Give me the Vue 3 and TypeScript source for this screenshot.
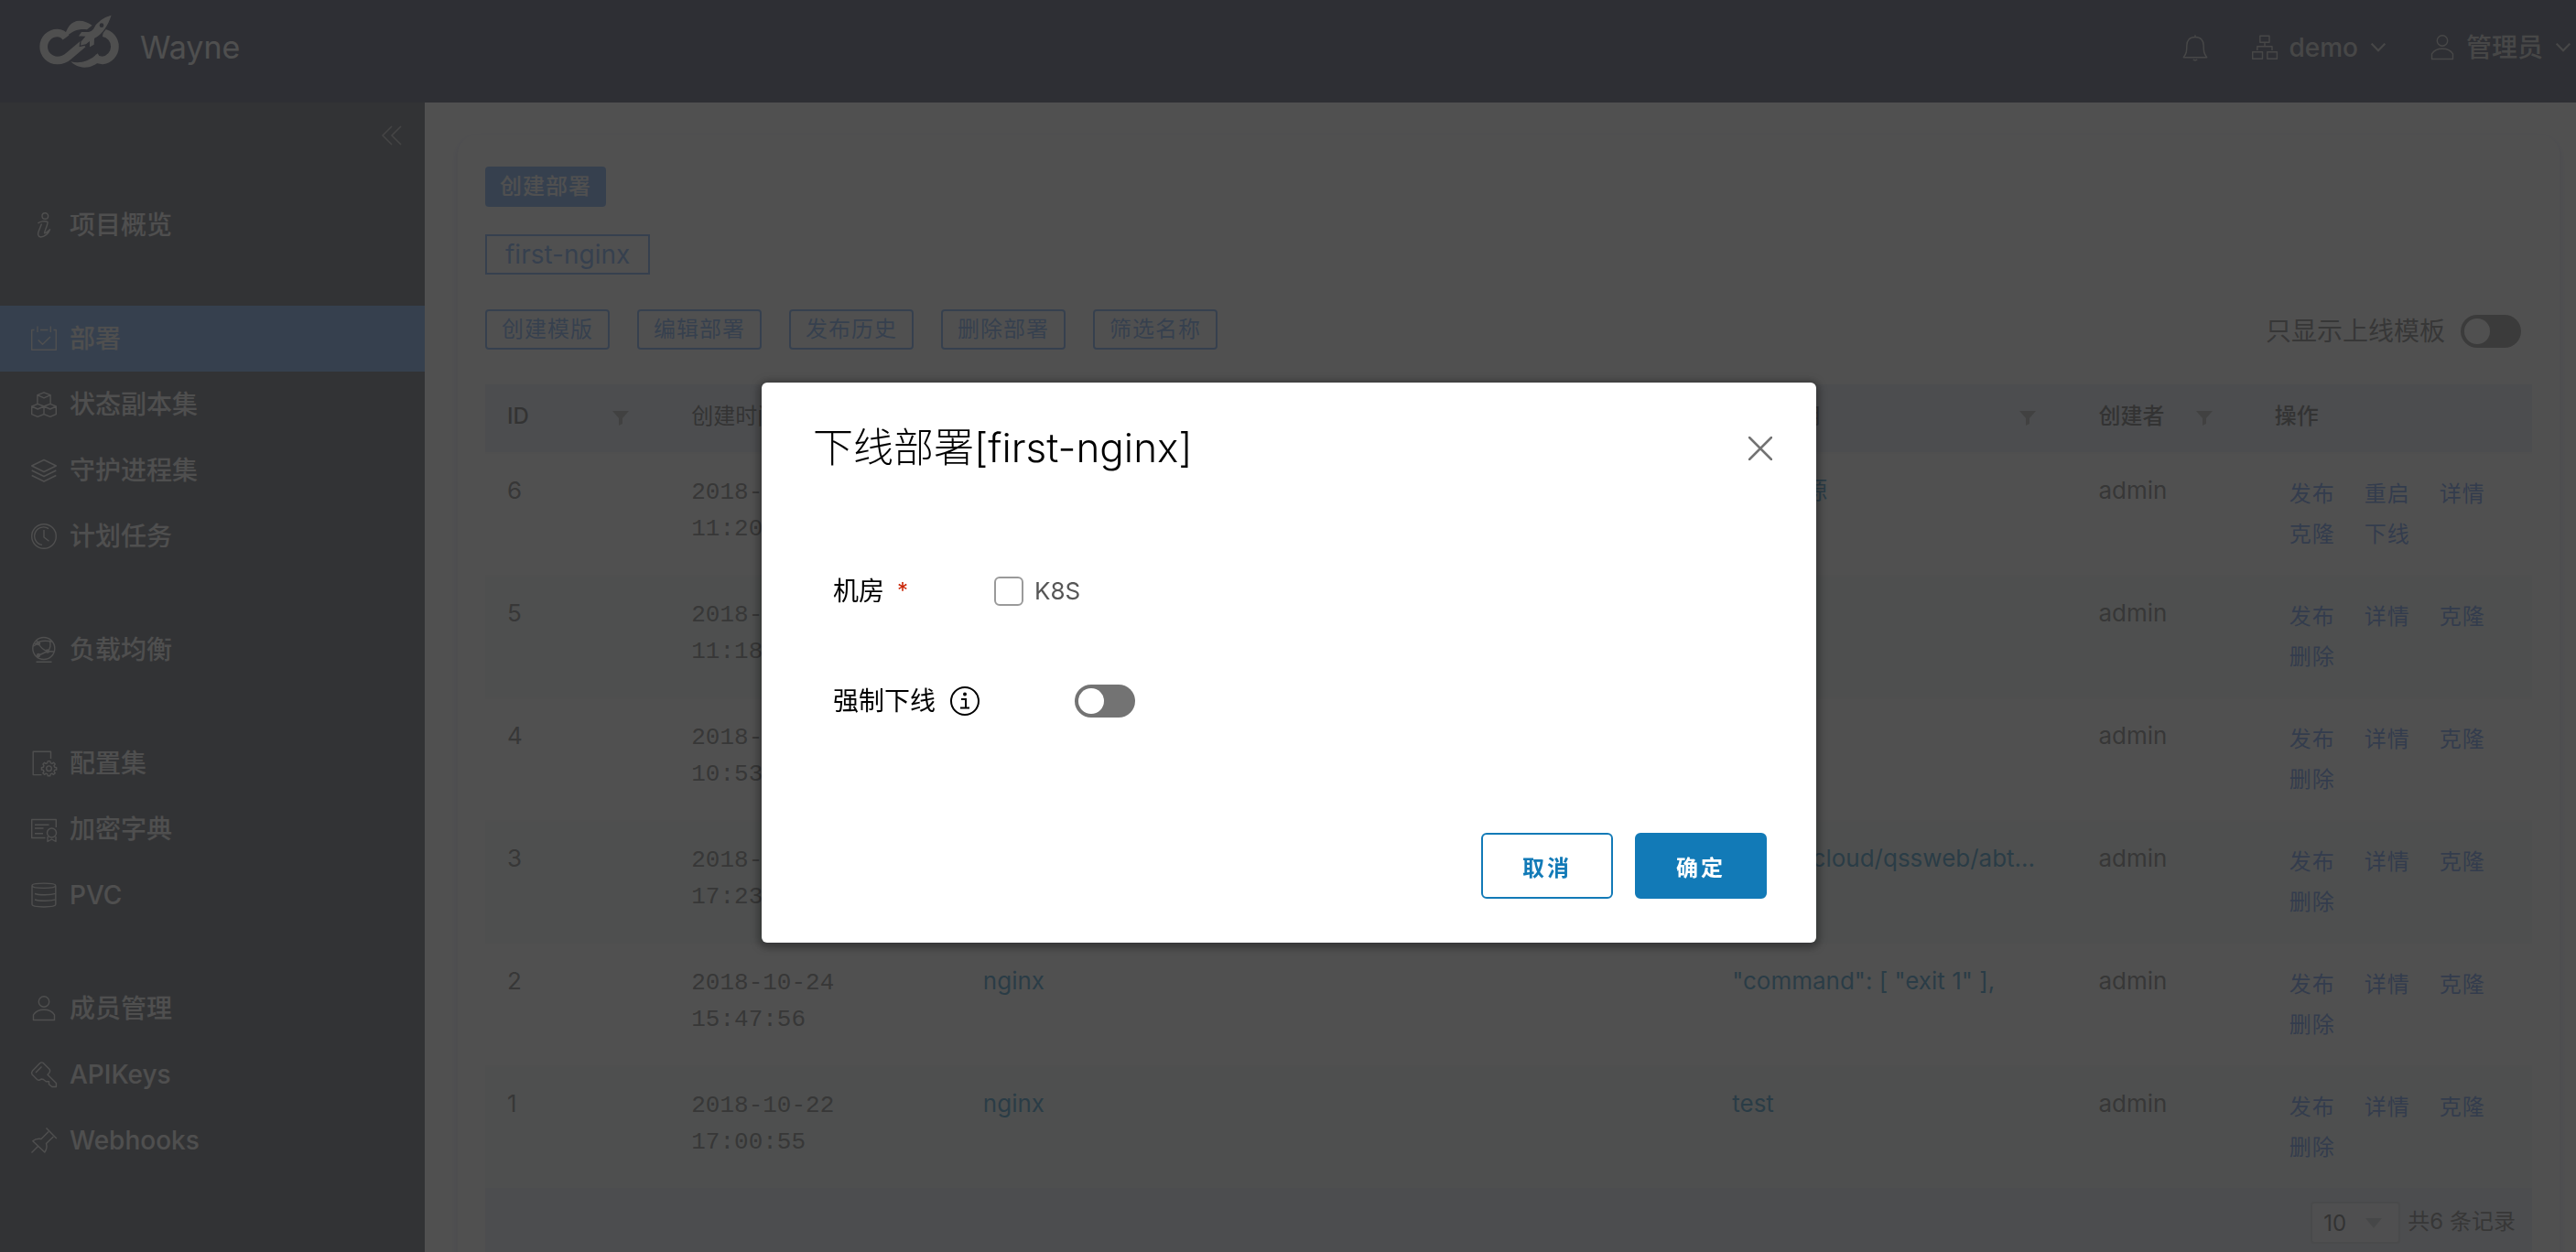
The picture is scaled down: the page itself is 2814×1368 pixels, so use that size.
<script setup lang="ts">
import { ref } from 'vue'

interface NavItem {
  label: string
  icon: string
  active?: boolean
}

interface Row {
  id: number
  date: string
  time: string
  name: string
  note: string
  user: string
  actions: string[]
}

const navGroups: NavItem[][] = [
  [{ label: '项目概览', icon: 'info' }],
  [
    { label: '部署', icon: 'deploy', active: true },
    { label: '状态副本集', icon: 'blocks' },
    { label: '守护进程集', icon: 'layers' },
    { label: '计划任务', icon: 'clock' },
  ],
  [{ label: '负载均衡', icon: 'network' }],
  [
    { label: '配置集', icon: 'config' },
    { label: '加密字典', icon: 'certificate' },
    { label: 'PVC', icon: 'storage' },
  ],
  [
    { label: '成员管理', icon: 'user' },
    { label: 'APIKeys', icon: 'key' },
    { label: 'Webhooks', icon: 'pin' },
  ],
]

const iconPaths: Record<string, string> = {
  info: 'M12 4a3.3 3.3 0 1 0 6.600 0a3.3 3.300 0 1 0-6.600 0M7.500 12C9 9.800 16 9 18 10.500C18.600 13 14.500 20.500 14.600 22.600C16 23.500 18.500 20.500 20.500 18.800C19 23.500 14 27 10.500 27C7 26.600 7.300 23 8.300 20.500L11.500 12.500',
  deploy: 'M3.500 4.500H.7V26.300H27.300V4.500H24.500M10 4.500H18.500M7 .5V7M21.300 .5V7M7.800 15.500L12.500 20.300L21 12',
  blocks: 'M6.900 13V3.600L14 .8L21.100 3.600V13M6.900 3.600L14 6.800L21.100 3.600M.7 16L7.200 13.300L14 16V24.600L7.200 27.400L.7 24.600ZM.7 16L7.200 19L14 16M14 16L20.800 13.300L27.300 16V24.600L20.800 27.400L14 24.600M14 16L20.800 19L27.300 16',
  layers: 'M14 2.500L27.300 9L14 15.500L.7 9ZM.7 14L14 20.500L27.300 14M.7 19.500L14 26L27.300 19.500',
  clock: 'M.7 14a13.300 13.300 0 1 0 26.600 0a13.300 13.300 0 1 0-26.600 0M19 5.600A9.800 9.800 0 1 0 12 23.400M14 7V15L19.500 19.300',
  network: 'M1.800 12.500a12 12 0 1 0 24 0a12 12 0 1 0-24 0M5.500 27.300H22.500M4 8C8 4 17 4 23 5M8 7C10 11 14 14.500 18 15.500C21 13 22 8 20 4M2.500 10L8 7L6 4M18 15.500L8.500 20L6 20.500M18 15.500L25 16M6.500 7a1.500 1.500 0 1 0 3 0a1.500 1.500 0 1 0-3 0M16.500 15.500a1.500 1.500 0 1 0 3 0a1.500 1.500 0 1 0-3 0M6.500 20a1.500 1.500 0 1 0 3 0a1.500 1.500 0 1 0-3 0',
  config: 'M21.500 9V1.200H2.200V26.600H11.500M16.700 19.700a2.800 2.800 0 1 0 5.600 0a2.800 2.800 0 1 0-5.600 0M18.300 11.600H20.700L21.200 13.700L22.900 14.400L24.700 13.200L26.300 14.900L25 16.700L25.700 18.300L27.700 18.700V21L25.700 21.400L25 23L26.200 24.700L24.500 26.300L22.800 25.200L21.200 25.900L20.700 27.800H18.300L17.800 25.900L16.200 25.200L14.500 26.300L12.900 24.700L14 23L13.300 21.400L11.400 21V18.700L13.400 18.200L14 16.600L12.900 14.900L14.500 13.300L16.200 14.400L17.800 13.700Z',
  certificate: 'M27.300 12V3.500H.7V23.500H15.500M4 9.200H19.500M4 13H13.500M4 18.800H13M17.500 18a5 5 0 1 0 10 0a5 5 0 1 0-10 0M18 22V27.500L22.500 25L27 27.500V22',
  storage: 'M1 3.700C1 .2 26.800 .2 26.800 3.700S1 7.200 1 3.700V24.300C1 27.800 26.800 27.800 26.800 24.300V3.700M4 12.500C9 14.300 21 14 26.800 12.300M4 19C9 20.800 21 20.500 26.800 18.800',
  user: 'M8.300 6.500a5.700 5.700 0 1 0 11.400 0a5.700 5.700 0 1 0-11.400 0M2.500 26.500V20.800C5 17 9 15.300 14 15.300S23 17 25.500 20.800V26.500Z',
  key: 'M13 1.300L20 8.300C21.300 10 20.500 12 18 14.200L27.400 23.500V27.500H22.800L19.500 24.800V21.800H16.300L13.500 19.500L11 19C9 21 8 20.800 6.500 19.500L1 14C.3 12.500 .5 11.300 1.500 10L9.500 1.800C10.800 .7 12 .6 13 1.300ZM5 12L11.500 5.500',
  pin: 'M16.500 .5L27.800 12M19 4.500L11 12.500C7.500 11.800 4.500 12.500 1.800 14.800L14.800 27C17 24 17.500 20.500 16.500 17.500L24.300 10M8 20L.5 27.500',
  bell: 'M14 2.500V.3M14 2.500C8 2.500 4.800 6 4.800 12C4.800 18 4.500 20.500 1.300 24.700H26.700C23.500 20.500 23.200 18 23.200 12C23.200 6 20 2.500 14 2.500M11.800 27C13 28 15 28 16.200 27',
  tree: 'M8.800 1.300H19V8.300H8.800ZM14 8.300V12.800M5.800 17V12.800H22V17M.7 18.800H11.500V26.300H.7ZM16.800 18.800H27.400V26.300H16.800Z',
}

const rows: Row[] = [
  { id: 6, date: '2018-10-29', time: '11:20:36', name: 'nginx', note: '更新资源', user: 'admin', actions: ['发布', '重启', '详情', '克隆', '下线'] },
  { id: 5, date: '2018-10-29', time: '11:18:09', name: 'nginx', note: 'test', user: 'admin', actions: ['发布', '详情', '克隆', '删除'] },
  { id: 4, date: '2018-10-29', time: '10:53:41', name: 'nginx', note: 'test', user: 'admin', actions: ['发布', '详情', '克隆', '删除'] },
  { id: 3, date: '2018-10-24', time: '17:23:12', name: 'nginx', note: 'harbor.cloud/qssweb/abt...', user: 'admin', actions: ['发布', '详情', '克隆', '删除'] },
  { id: 2, date: '2018-10-24', time: '15:47:56', name: 'nginx', note: '"command": [ "exit 1" ],', user: 'admin', actions: ['发布', '详情', '克隆', '删除'] },
  { id: 1, date: '2018-10-22', time: '17:00:55', name: 'nginx', note: 'test', user: 'admin', actions: ['发布', '详情', '克隆', '删除'] },
]

const toolbar = ['创建模版', '编辑部署', '发布历史', '删除部署', '筛选名称']

const onlineOnly = ref(false)
const force = ref(false)
const room = ref(false)
const pageSize = ref('10')
</script>

<template>
  <div class="app">
    <header class="topbar">
      <a class="brand" href="#">
        <svg class="logo" viewBox="127 46 270 177" aria-hidden="true">
          <path class="band" d="M214 124C205 112 195 109 186 109A45 45 0 0 0 186 199C204 199 214 193 224 184L270 145" />
          <path class="band" d="M336 108A46 46 0 0 1 334 199C324 199 316 197 306 191" />
          <path class="solid" d="M209 128C214 92 232 69 258 69C274 69 287 75 300 84L283 98C262 95 236 98 209 128Z" />
          <path class="solid" d="M230 203C254 210 288 206 318 176L330 196C312 214 296 222 275 222C256 222 240 214 230 203Z" />
          <path class="rocket" d="M366 48C336 56 312 74 302 96C298 101 294 103 288 104L264 104L252 121L274 122L262 136L260 152L280 148L290 140L290 159L308 148L309 128C336 114 354 86 366 48Z" />
          <circle class="hole" cx="331" cy="84" r="7" />
        </svg>
        <span class="brand-name">Wayne</span>
      </a>
      <nav class="top-actions">
        <button class="top-item" type="button" aria-label="通知">
          <svg class="icon" viewBox="0 0 28 28"><path :d="iconPaths.bell" /></svg>
        </button>
        <button class="top-item" type="button">
          <svg class="icon" viewBox="0 0 28 28"><path :d="iconPaths.tree" /></svg>
          <span>demo</span>
          <svg class="chevron" viewBox="0 0 16 10"><path d="M.7 .7L8 8.300L15.300 .7" /></svg>
        </button>
        <button class="top-item" type="button">
          <svg class="icon" viewBox="0 0 28 28"><path :d="iconPaths.user" /></svg>
          <span>管理员</span>
          <svg class="chevron" viewBox="0 0 16 10"><path d="M.7 .7L8 8.300L15.300 .7" /></svg>
        </button>
      </nav>
    </header>

    <div class="body">
      <aside class="sidebar">
        <button class="collapse" type="button" aria-label="收起">
          <svg viewBox="0 0 22 22"><path d="M11 1L1 11L11 21M21 1L11 11L21 21" /></svg>
        </button>
        <nav class="nav">
          <ul v-for="(group, g) in navGroups" :key="g" class="nav-group">
            <li v-for="item in group" :key="item.label">
              <a class="nav-item" :class="{ active: item.active }" href="#">
                <svg class="icon" viewBox="0 0 28 28"><path :d="iconPaths[item.icon]" /></svg>
                <span>{{ item.label }}</span>
              </a>
            </li>
          </ul>
        </nav>
      </aside>

      <main class="main">
        <section class="card">
          <div class="line">
            <button class="btn solid-btn" type="button">创建部署</button>
          </div>
          <div class="line tabs">
            <button class="tab" type="button">first-nginx</button>
          </div>
          <div class="line tools">
            <div class="tool-buttons">
              <button v-for="t in toolbar" :key="t" class="btn outline-btn" type="button">{{ t }}</button>
            </div>
            <label class="switch-label">
              <span>只显示上线模板</span>
              <input v-model="onlineOnly" class="switch" type="checkbox" />
            </label>
          </div>

          <table class="grid">
            <colgroup>
              <col class="c-id" />
              <col class="c-time" />
              <col class="c-name" />
              <col class="c-note" />
              <col class="c-user" />
              <col class="c-ops" />
            </colgroup>
            <thead>
              <tr>
                <th>
                  <div class="head"><span>ID</span><svg class="filter" viewBox="0 0 18 16"><path d="M0 0H18L11 8V14L7 16V8Z" /></svg></div>
                </th>
                <th class="light">创建时间</th>
                <th aria-label="名称">
                  <div class="head"><span></span><svg class="filter" viewBox="0 0 18 16"><path d="M0 0H18L11 8V14L7 16V8Z" /></svg></div>
                </th>
                <th>
                  <div class="head"><span>发布说明</span><svg class="filter" viewBox="0 0 18 16"><path d="M0 0H18L11 8V14L7 16V8Z" /></svg></div>
                </th>
                <th>
                  <div class="head"><span>创建者</span><svg class="filter" viewBox="0 0 18 16"><path d="M0 0H18L11 8V14L7 16V8Z" /></svg></div>
                </th>
                <th>操作</th>
              </tr>
            </thead>
            <tbody>
              <tr v-for="row in rows" :key="row.id">
                <td>{{ row.id }}</td>
                <td class="stamp">{{ row.date }}<br />{{ row.time }}</td>
                <td><a class="link" href="#">{{ row.name }}</a></td>
                <td><a class="link" href="#">{{ row.note }}</a></td>
                <td>{{ row.user }}</td>
                <td class="ops">
                  <div class="op-list">
                    <button v-for="a in row.actions" :key="a" class="btn link-btn" type="button">{{ a }}</button>
                  </div>
                </td>
              </tr>
            </tbody>
          </table>
          <footer class="pager">
            <div class="select-wrap">
              <select v-model="pageSize" aria-label="每页条数">
                <option>10</option>
                <option>20</option>
                <option>50</option>
              </select>
              <span class="caret"></span>
            </div>
            <span>共6 条记录</span>
          </footer>
        </section>
      </main>
    </div>

    <div class="backdrop">
      <form class="modal" role="dialog" aria-labelledby="dialog-title" @submit.prevent>
        <header class="modal-head">
          <h3 id="dialog-title">下线部署<span>[first-nginx]</span></h3>
          <button class="close" type="button" aria-label="关闭">
            <svg viewBox="0 0 26 26"><path d="M1 1L25 25M25 1L1 25" /></svg>
          </button>
        </header>
        <div class="modal-body">
          <div class="field">
            <span class="field-label narrow">机房<i class="star">*</i></span>
            <label class="check"><input v-model="room" type="checkbox" /><span>K8S</span></label>
          </div>
          <div class="field">
            <label class="field-label wide" for="force">强制下线
              <svg class="tip" viewBox="0 0 32 32">
                <circle cx="16" cy="16" r="15" />
                <path d="M12 14H17V23M11 23.500H21" />
                <circle class="dot" cx="16" cy="8.500" r="2" />
              </svg>
            </label>
            <input id="force" v-model="force" class="switch" type="checkbox" />
          </div>
        </div>
        <footer class="modal-foot">
          <button class="big-btn cancel" type="button">取消</button>
          <button class="big-btn confirm" type="submit">确定</button>
        </footer>
      </form>
    </div>
  </div>
</template>

<style>
html,
body {
  margin: 0;
  overflow: hidden;
}
</style>

<style scoped>
.app {
  height: 100vh;
  display: flex;
  flex-direction: column;
  overflow: hidden;
  background: #fff;
  color: #565656;
  font-family: Inter, "Noto Sans CJK SC", sans-serif;
  font-size: 26px;
  line-height: 40px;
}

* {
  box-sizing: border-box;
}

button,
select,
input {
  font-family: inherit;
  margin: 0;
}

a {
  text-decoration: none;
}

svg {
  display: block;
  flex: none;
  fill: none;
}

/* top bar */
.topbar {
  flex: none;
  height: 112px;
  padding: 0 6px 8px 43px;
  display: flex;
  align-items: center;
  justify-content: space-between;
  background: #1d2445;
}

.brand {
  display: flex;
  align-items: center;
  gap: 20px;
  color: #f4f4f4;
}

.logo {
  width: 90px;
  height: 59px;
  margin-bottom: 16px;
}

.logo .band {
  stroke: #f4f4f4;
  stroke-width: 26;
}

.logo .solid {
  fill: #f4f4f4;
}

.logo .rocket {
  fill: #f4f4f4;
  stroke: #1d2445;
  stroke-width: 4;
}

.logo .hole {
  fill: #1d2445;
}

.brand-name {
  font-size: 34px;
  font-weight: 400;
}

.top-actions {
  display: flex;
  align-items: center;
  gap: 48px;
}

.top-item {
  display: flex;
  align-items: center;
  gap: 12px;
  padding: 0;
  border: 0;
  background: none;
  color: #c4c4c4;
  font-size: 28px;
  font-weight: 500;
  line-height: 40px;
}

.icon {
  width: 28px;
  height: 28px;
  overflow: visible;
  stroke: currentColor;
  stroke-width: 1.4;
  stroke-linejoin: round;
}

.chevron {
  width: 16px;
  height: 10px;
  margin-left: 2px;
  stroke: currentColor;
  stroke-width: 2;
}

/* layout */
.body {
  flex: 1;
  min-height: 0;
  display: flex;
}

.sidebar {
  flex: none;
  width: 464px;
  background: #383e4c;
  color: #f4f4f4;
}

.collapse {
  display: block;
  margin: 25px 25px 51px auto;
  padding: 0;
  border: 0;
  background: none;
  color: #b4b4b4;
}

.collapse svg {
  width: 22px;
  height: 22px;
  stroke: currentColor;
  stroke-width: 1.5;
}

.nav-group {
  list-style: none;
  margin: 0 0 52px;
  padding: 0;
}

.nav-item {
  height: 72px;
  padding-left: 34px;
  display: flex;
  align-items: center;
  gap: 14px;
  color: inherit;
  font-size: 28px;
  font-weight: 500;
}

.nav-item.active {
  background: #5295f2;
}

.main {
  flex: 1;
  min-width: 0;
  padding: 35px 18px 0 36px;
  overflow: hidden;
}

.card {
  padding: 35px 30px 40px;
  border-radius: 22px;
  box-shadow: 0 4px 4px 4px #e8e8f8;
  background: #fff;
}

.line {
  display: flex;
  align-items: center;
}

.tabs {
  margin-top: 30px;
}

.tools {
  margin-top: 38px;
  justify-content: space-between;
}

.tool-buttons {
  display: flex;
  gap: 30px;
}

.btn {
  height: 44px;
  padding: 0 16px;
  border: 0;
  border-radius: 4px;
  background: none;
  font-size: 24px;
  line-height: 40px;
  letter-spacing: 1px;
  white-space: nowrap;
}

.solid-btn {
  background: #5295f2;
  color: #fff;
  font-weight: 500;
}

.outline-btn {
  border: 2px solid #5295f2;
  color: #5295f2;
}

.link-btn {
  color: #3d78e6;
}

.tab {
  height: 44px;
  padding: 0 20px;
  border: 2px solid #5295f2;
  background: none;
  color: #5295f2;
  font-size: 28px;
  line-height: 40px;
}

.switch-label {
  display: flex;
  align-items: center;
  gap: 17px;
  padding: 4px 12px 0 0;
  font-size: 28px;
}

.switch {
  appearance: none;
  width: 66px;
  height: 36px;
  padding: 4px;
  border-radius: 18px;
  background: #737373;
}

.switch::before {
  content: "";
  display: block;
  width: 28px;
  height: 28px;
  border-radius: 50%;
  background: #fff;
}

/* data grid */
.grid {
  width: 100%;
  margin-top: 38px;
  table-layout: fixed;
  border-collapse: separate;
  border-spacing: 0;
}

.c-id { width: 9%; }
.c-time { width: 14.25%; }
.c-name { width: 36.6%; }
.c-note { width: 17.9%; }
.c-user { width: 8.6%; }

.grid th {
  height: 74px;
  padding: 0 24px 4px;
  background: #e2e9f4;
  color: #414141;
  font-size: 24px;
  font-weight: 500;
  line-height: 36px;
  text-align: left;
}

.grid th.light {
  font-weight: 400;
}

.head {
  display: flex;
  align-items: center;
  justify-content: space-between;
}

.filter {
  width: 18px;
  height: 16px;
  margin: 4px 20px 0 0;
  fill: #9a9a9a;
}

.grid td {
  height: 134px;
  padding: 20px 24px 0;
  border-top: 2px solid #f4f6f8;
  vertical-align: top;
  white-space: nowrap;
}

.grid tbody tr:nth-child(even) td {
  background: #eef8f4;
}

.grid td.stamp {
  padding-top: 22px;
  font-family: "Liberation Mono", monospace;
}

.link {
  color: #007cbb;
}

.grid td.ops {
  padding-top: 22px;
  white-space: normal;
}

.op-list {
  display: flex;
  flex-wrap: wrap;
}

.pager {
  height: 80px;
  padding: 13px 18px 0 0;
  display: flex;
  align-items: flex-start;
  justify-content: flex-end;
  gap: 8px;
  border-top: 2px solid #e2e9f4;
  background: #e2e9f4;
  font-size: 24px;
  line-height: 44px;
}

.select-wrap {
  position: relative;
}

.select-wrap select {
  appearance: none;
  display: block;
  width: 98px;
  height: 46px;
  padding: 0 12px;
  border: 2px solid #d0d4da;
  border-radius: 4px;
  background: #f4f6fa;
  color: #414141;
  font-size: 24px;
}

.caret {
  position: absolute;
  right: 20px;
  top: 18px;
  border: 9px solid transparent;
  border-top: 11px solid #bcc0c6;
  border-bottom: 0;
}

/* dialog */
.backdrop {
  position: fixed;
  inset: 0;
  padding: 80px 0 0 2px;
  display: flex;
  align-items: center;
  justify-content: center;
  background: rgba(49, 49, 49, 0.85);
}

.modal {
  width: 1152px;
  padding: 48px 48px 48px 56px;
  border-radius: 6px;
  background: #fff;
  color: #000;
  box-shadow: 0 2px 8px 4px rgba(0, 0, 0, 0.3);
}

.modal-head {
  display: flex;
  align-items: center;
  justify-content: space-between;
}

.modal-head h3 {
  margin: 0;
  font-size: 44px;
  font-weight: 200;
  line-height: 46px;
  padding-bottom: 2px;
}

.modal-head h3 span {
  font-weight: 300;
}

.close {
  padding: 0;
  border: 0;
  background: none;
}

.close svg {
  width: 26px;
  height: 26px;
  stroke: #737373;
  stroke-width: 2.5;
  stroke-linecap: round;
}

.modal-body {
  display: flex;
  flex-direction: column;
  gap: 72px;
  margin-top: 108px;
  padding-left: 22px;
}

.field {
  height: 48px;
  display: flex;
  align-items: center;
}

.field-label {
  display: flex;
  align-items: center;
  gap: 14px;
  font-size: 28px;
}

.narrow {
  width: 176px;
}

.wide {
  width: 264px;
  gap: 16px;
}

.star {
  color: #c92100;
  font-size: 24px;
  font-style: normal;
}

.tip {
  width: 32px;
  height: 32px;
  stroke: #000;
  stroke-width: 2;
}

.tip .dot {
  fill: #000;
  stroke: none;
}

.check {
  display: flex;
  align-items: center;
  gap: 12px;
  color: #565656;
  font-size: 26px;
}

.check input {
  appearance: none;
  width: 32px;
  height: 32px;
  border: 2px solid #9a9a9a;
  border-radius: 6px;
  background: #fff;
}

.modal-foot {
  display: flex;
  justify-content: flex-end;
  gap: 24px;
  margin-top: 120px;
  padding-right: 6px;
}

.big-btn {
  width: 144px;
  height: 72px;
  border: 2px solid #127ab7;
  border-radius: 6px;
  font-size: 24px;
  font-weight: 700;
  letter-spacing: 3px;
}

.cancel {
  background: #fff;
  color: #127ab7;
}

.confirm {
  background: #127ab7;
  color: #fff;
}
</style>
